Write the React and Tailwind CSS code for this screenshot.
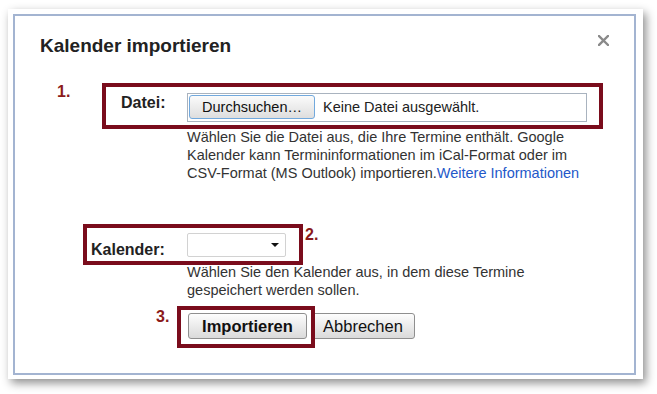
import React from 'react';

const ImportDialog = () => {
    return (
        <div className="w-[657px] h-[394px] bg-white font-['Liberation_Sans',Arial,sans-serif] pt-[9px] pl-[8px]">
            <div className="w-[635px] h-[370px] bg-white pt-[5px] pl-[5px] shadow-[3px_4px_9px_rgba(0,0,0,0.45)]">
                <div className="w-[623px] h-[361px] border-2 border-[#a3b4d1]">
                    {/* header */}
                    <div className="flex justify-between items-start mt-[19px] pl-[25px] pr-[25px]">
                        <h2 className="text-[19px] leading-[22px] font-bold text-[#222]">Kalender importieren</h2>
                        <svg width="11" height="11" viewBox="0 0 11 11" className="mt-[0px]">
                            <path d="M1 1 L10 10 M10 1 L1 10" stroke="#8a8a8a" strokeWidth="2.4" strokeLinecap="square" />
                        </svg>
                    </div>

                    {/* step 1 */}
                    <div className="flex items-start mt-[26px] ml-[42px]">
                        <span className="w-[45px] text-[16px] leading-[18px] font-bold text-[#8b1a1a]">1.</span>
                        <div className="w-[501px] h-[46px] border-[4px] border-[#7a0c1c] flex items-start pl-[15px]">
                            <span className="w-[66px] mt-[7px] text-[16px] leading-[18px] font-bold text-[#222]">Datei:</span>
                            <div className="w-[400px] h-[29px] mt-[6px] border border-[#a9b3bf] flex items-start pl-[1px] pt-[1px]">
                                <button className="w-[126px] h-[24px] rounded-[3px] border-[1.5px] border-[#72a9dd] bg-gradient-to-b from-[#fbfbfb] to-[#dedede] text-[14.5px] text-[#111] leading-none">
                                    Durchsuchen…
                                </button>
                                <span className="ml-[8px] mt-[4px] text-[14.5px] leading-[16px] text-[#222]">Keine Datei ausgewählt.</span>
                            </div>
                        </div>
                    </div>
                    <p className="ml-[172px] mt-[-1px] text-[14.5px] leading-[18px] text-[#333] whitespace-nowrap">
                        Wählen Sie die Datei aus, die Ihre Termine enthält. Google<br />
                        Kalender kann Termininformationen im iCal-Format oder im<br />
                        CSV-Format (MS Outlook) importieren.<span className="text-[#2358c9]">Weitere Informationen</span>
                    </p>

                    {/* step 2 */}
                    <div className="flex items-start mt-[42px] ml-[68px]">
                        <div className="w-[220px] h-[41px] border-[4px] border-[#7a0c1c] flex items-start pl-[4px]">
                            <span className="w-[96px] mt-[13px] text-[16px] leading-[18px] font-bold text-[#222]">Kalender:</span>
                            <div className="w-[99px] h-[24px] mt-[5px] border border-[#d2d2d2] rounded-[2px] bg-white flex items-center justify-end pr-[6px]">
                                <span className="w-0 h-0 border-l-[4px] border-r-[4px] border-t-[4px] border-l-transparent border-r-transparent border-t-[#111]" />
                            </div>
                        </div>
                        <span className="ml-[2px] mt-[2px] text-[16px] leading-[18px] font-bold text-[#8b1a1a]">2.</span>
                    </div>
                    <p className="ml-[172px] mt-[-2px] text-[14.5px] leading-[18px] text-[#333] whitespace-nowrap">
                        Wählen Sie den Kalender aus, in dem diese Termine<br />
                        gespeichert werden sollen.
                    </p>

                    {/* step 3 */}
                    <div className="flex items-start mt-[7px] ml-[141px]">
                        <span className="w-[21px] mt-[2px] text-[16px] leading-[18px] font-bold text-[#8b1a1a]">3.</span>
                        <div className="relative z-10 w-[138px] h-[42px] border-[4px] border-[#7a0c1c] pl-[7px] pt-[3px]">
                            <button className="w-[119px] h-[26px] rounded-[3px] border border-[#8f8f8f] bg-gradient-to-b from-[#fdfdfd] to-[#dadada] text-[16.5px] font-bold text-[#111] leading-none">
                                Importieren
                            </button>
                        </div>
                        <button className="ml-[-4px] mt-[7px] w-[104px] h-[26px] rounded-[3px] border border-[#8f8f8f] bg-gradient-to-b from-[#fdfdfd] to-[#dadada] text-[16.5px] text-[#111] leading-none">
                            Abbrechen
                        </button>
                    </div>
                </div>
            </div>
        </div>
    );
};

export default function App() {
    return <ImportDialog />;
}
